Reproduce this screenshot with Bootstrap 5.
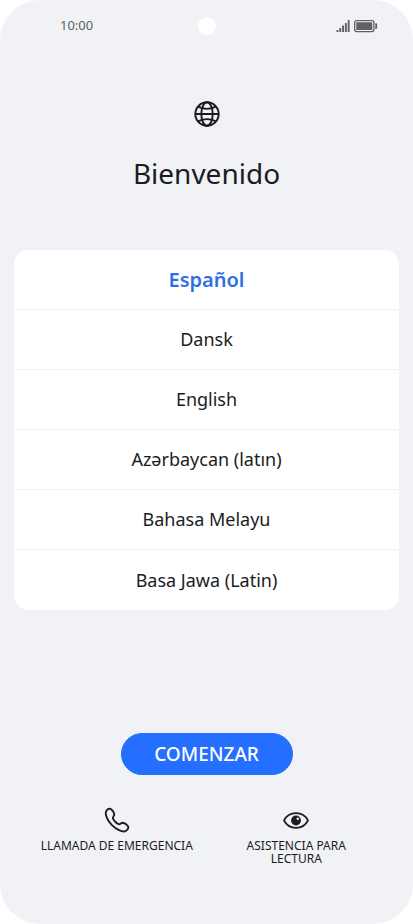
<!DOCTYPE html>
<html lang="es">
<head>
<meta charset="utf-8">
<meta name="viewport" content="width=device-width, initial-scale=1">
<title>Bienvenido</title>
<link rel="stylesheet" href="https://cdn.jsdelivr.net/npm/bootstrap@5.3.0/dist/css/bootstrap.min.css">
<style>
body { background: #fff; color: #1b1c1e; font-family: "Noto Sans", "Open Sans", sans-serif; }
.screen { background: #f1f2f6; border-radius: 40px; }
.status-bar { height: 51px; padding: 0 35px; color: #606164; font-size: 13px; }
.status-side { flex: 1 1 0; }
.clock { padding-left: 25px; }
.camera { width: 18px; height: 18px; background: #fff; }
.intro { padding-top: 49px; }
.intro h1 { font-size: 28px; line-height: 40px; margin: 25px 0 0; }
.languages { margin: 57px 14px 0; border-radius: 14px; --bs-list-group-border-color: #f0f1f3; --bs-list-group-action-color: #1b1c1e; --bs-list-group-color: #1b1c1e; }
.languages .list-group-item { height: 60px; padding: 0; font-size: 18px; }
.languages .list-group-item.chosen { color: #2e6fe8; font-size: 20px; }
.start { width: 172px; height: 42px; padding: 0; font-size: 19px; font-weight: 500; --bs-btn-bg: #246fff; --bs-btn-border-color: #246fff; }
.actions { padding: 30px 27px 59px; }
.actions .btn { font-size: 12px; line-height: 13px; padding: 0; border: 0; --bs-btn-color: #1b1c1e; }
.help-label { max-width: 120px; }
</style>
</head>
<body>
<main class="screen d-flex flex-column min-vh-100">
  <header class="status-bar d-flex align-items-center">
    <div class="status-side"><time class="clock">10:00</time></div>
    <span class="camera rounded-circle"></span>
    <div class="status-side d-flex justify-content-end align-items-center">
      <svg width="42" height="14" viewBox="0 0 42 14" fill="currentColor" role="img" aria-label="Señal y batería">
        <path d="M.5 11h1.900v2H.5zM3.300 9h1.900v4H3.300zM6.100 6.500H8V13H6.100zM8.900 4h1.900v9H8.900zM11.700 1h1.900v12h-1.900z"/>
        <rect x="18.700" y="1.600" width="19.200" height="11" rx="2" fill="none" stroke="currentColor" stroke-width="1.300"/>
        <rect x="20.300" y="3.200" width="16" height="7.800" rx=".6"/>
        <path d="M39.300 4.300h1q.8 0 .8.800v4q0 .8-.8.800h-1z"/>
      </svg>
    </div>
  </header>

  <section class="intro text-center">
    <svg class="d-block mx-auto" width="28" height="28" viewBox="0 0 28 28" fill="none" stroke="currentColor" stroke-width="1.900" aria-hidden="true">
      <circle cx="14" cy="14" r="11.700"/>
      <ellipse cx="14" cy="14" rx="5.700" ry="11.700"/>
      <path d="M2.300 14h23.400M5 6.700Q14 11 23 6.700M5 21.300Q14 17 23 21.300"/>
    </svg>
    <h1 class="fw-normal">Bienvenido</h1>
  </section>

  <div class="languages list-group list-group-flush text-center overflow-hidden">
    <button type="button" class="list-group-item list-group-item-action text-center chosen fw-semibold" aria-pressed="true">Español</button>
    <button type="button" class="list-group-item list-group-item-action text-center" lang="da">Dansk</button>
    <button type="button" class="list-group-item list-group-item-action text-center" lang="en">English</button>
    <button type="button" class="list-group-item list-group-item-action text-center" lang="az">Azərbaycan (latın)</button>
    <button type="button" class="list-group-item list-group-item-action text-center" lang="ms">Bahasa Melayu</button>
    <button type="button" class="list-group-item list-group-item-action text-center" lang="jv">Basa Jawa (Latin)</button>
  </div>

  <footer class="mt-auto text-center">
    <button type="button" class="start btn btn-primary rounded-pill">COMENZAR</button>
    <div class="actions row g-0">
      <div class="col-6">
        <button type="button" class="btn">
          <svg class="d-block mx-auto mb-1" width="30" height="30" viewBox="0 0 30 30" fill="none" stroke="currentColor" stroke-width="1.900" stroke-linejoin="round" aria-hidden="true">
            <path d="M4.200 6.200C5.300 4.100 7.500 3 9.100 4.200C10.600 5.300 12 7.500 12.300 9.200C12.600 10.900 10.500 11.700 10.900 13.300C11.400 15.300 14.700 18.600 16.700 19.200C18.300 19.700 19.200 17.500 20.900 17.700C22.600 18 24.800 19.500 25.900 21C27.100 22.600 25.800 25 23.800 26C20.400 27.700 13.600 23.900 9.900 20.200C6.200 16.500 2.500 9.600 4.200 6.200Z"/>
          </svg>
          <span class="d-block text-nowrap">LLAMADA DE EMERGENCIA</span>
        </button>
      </div>
      <div class="col-6">
        <button type="button" class="btn">
          <svg class="d-block mx-auto mb-1" width="30" height="30" viewBox="0 0 30 30" aria-hidden="true">
            <path d="M3 15.500C5.500 10.600 9.900 8.200 15 8.200S24.500 10.600 27 15.500C24.500 20.400 20.100 22.800 15 22.800S5.500 20.400 3 15.500Z" fill="none" stroke="currentColor" stroke-width="1.700" stroke-linejoin="round"/>
            <circle cx="15" cy="15.500" r="4.900" fill="currentColor"/>
            <circle cx="16.800" cy="13.700" r="1.200" fill="#f1f2f6"/>
          </svg>
          <span class="help-label d-block mx-auto">ASISTENCIA PARA LECTURA</span>
        </button>
      </div>
    </div>
  </footer>
</main>
<script src="https://cdn.jsdelivr.net/npm/bootstrap@5.3.0/dist/js/bootstrap.bundle.min.js"></script>
</body>
</html>
